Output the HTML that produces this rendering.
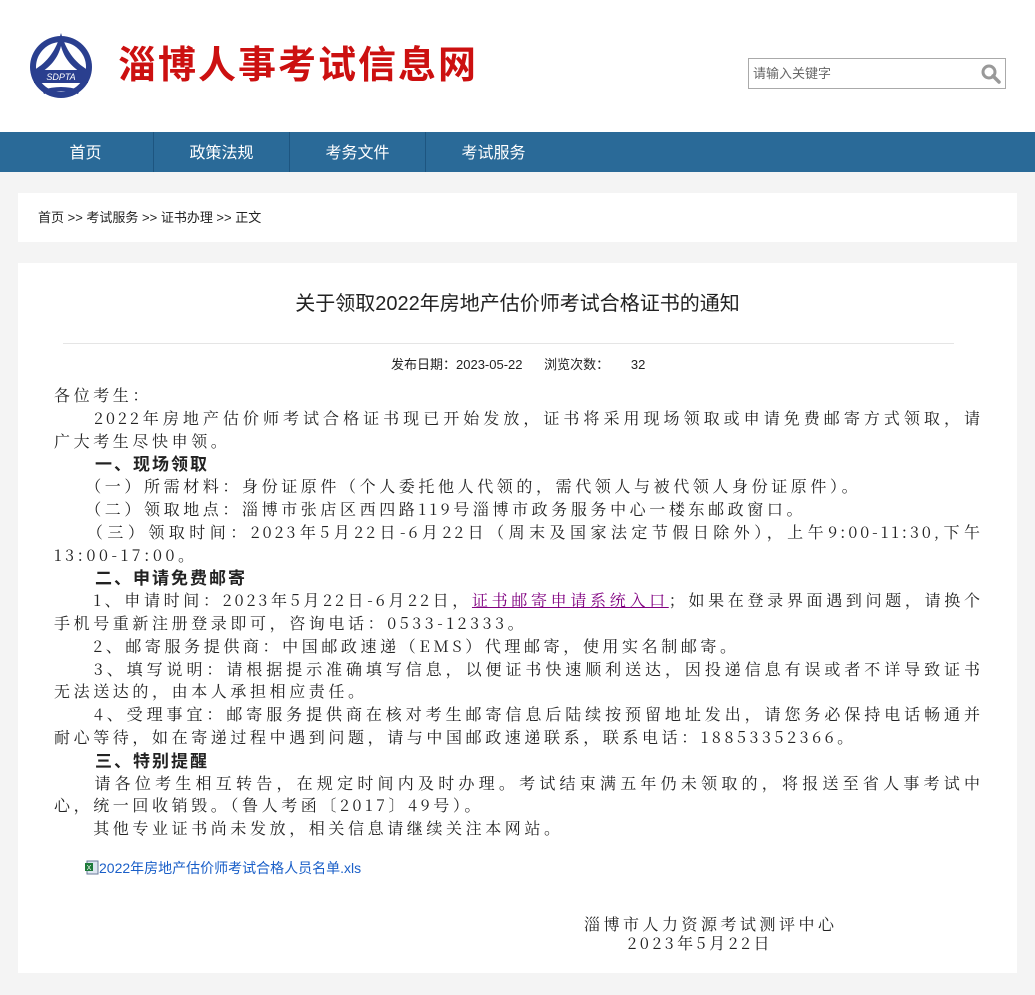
<!DOCTYPE html>
<html><head><meta charset="utf-8"><style>
body{margin:0;background:#f4f4f4;font-family:"Liberation Sans","Noto Sans CJK SC",sans-serif;}
.hd{height:132px;background:#fff;position:relative}
.title{position:absolute;left:118px;top:41px;font-size:38px;font-weight:bold;color:#cc1010;letter-spacing:2px;line-height:50px}
.search{position:absolute;left:748px;top:58px;width:258px;height:31px;border:1px solid #aaa;box-sizing:border-box;font-size:13px;color:#666;line-height:29px;padding-left:4px}
.nav{height:40px;background:#2a6a98;position:relative}
.nav div{position:absolute;top:2px;height:40px;line-height:40px;color:#fff;font-size:16px;text-align:center}
.nav i{position:absolute;top:0;width:1px;height:40px;background:#1d5580}
.bc{position:absolute;left:18px;top:193px;width:999px;height:49px;background:#fff;font-size:13px;line-height:49px;padding-left:20px;box-sizing:border-box;color:#222}
.ct{position:absolute;left:18px;top:263px;width:999px;height:710px;background:#fff}
.h1{position:absolute;left:0;width:100%;top:24px;text-align:center;font-size:20px;color:#222}
.hr{position:absolute;left:45px;right:63px;top:80px;border-top:1px solid #e5e5e5}
.meta{position:absolute;left:373px;top:91px;font-size:13px;color:#222}
.body{position:absolute;left:36px;top:121px;width:929px;font-family:"Noto Serif CJK SC",serif;font-size:16px;line-height:22.8px;color:#222;letter-spacing:3.6px}
.body div{white-space:nowrap}
.j{text-align:justify;text-align-last:justify;white-space:normal!important;letter-spacing:3px}
.b{font-weight:bold;font-family:"Noto Sans CJK SC",sans-serif;letter-spacing:2px;font-size:17px;padding-left:3px}
a{color:#800080;text-decoration:underline}
.att{position:absolute;left:66px;top:595px;font-size:14px;color:#1a5fc8}
.sig{position:absolute;left:566px;top:651px;font-family:"Noto Serif CJK SC",serif;font-size:16px;line-height:19px;color:#222;letter-spacing:3.5px}
</style></head><body>
<div class="hd">
<svg style="position:absolute;left:28px;top:32px" width="66" height="68" viewBox="0 0 66 68"><circle cx="33" cy="35" r="31" fill="#2a3f8f"/><circle cx="33" cy="35" r="25" fill="#fff"/><path d="M33 1 C28 18 20 30 6 38 L10 42 C22 36 30 26 33 14 C36 26 44 36 56 42 L60 38 C46 30 38 18 33 1Z" fill="#2a3f8f"/><rect x="6" y="38" width="54" height="13" fill="#2a3f8f"/><text x="33" y="48" font-size="9" fill="#fff" text-anchor="middle" font-style="italic" font-family="Liberation Sans">SDPTA</text><path d="M14 58 Q33 52 52 58 L50 62 Q33 57 16 62Z" fill="#2a3f8f"/></svg>
<div class="title">淄博人事考试信息网</div>
<div class="search">请输入关键字<svg style="position:absolute;right:4px;top:5px" width="20" height="20" viewBox="0 0 20 20"><circle cx="8" cy="8" r="6" fill="none" stroke="#999" stroke-width="3"/><path d="M12 12 L18 18" stroke="#999" stroke-width="3.5" stroke-linecap="round"/></svg></div>
</div>
<div class="nav">
<div style="left:18px;width:135px">首页</div><i style="left:153px"></i>
<div style="left:154px;width:135px">政策法规</div><i style="left:289px"></i>
<div style="left:290px;width:135px">考务文件</div><i style="left:425px"></i>
<div style="left:426px;width:135px">考试服务</div>
</div>
<div class="bc">首页 &gt;&gt; 考试服务 &gt;&gt; 证书办理 &gt;&gt; 正文</div>
<div class="ct">
<div class="h1">关于领取2022年房地产估价师考试合格证书的通知</div>
<div class="hr"></div>
<div class="meta">发布日期：2023-05-22 &nbsp;&nbsp;&nbsp;&nbsp; 浏览次数： &nbsp;&nbsp;&nbsp;&nbsp;&nbsp;32</div>
<div class="body">
<div>各位考生：</div>
<div class="j">&#12288;&#12288;2022年房地产估价师考试合格证书现已开始发放，证书将采用现场领取或申请免费邮寄方式领取，请</div>
<div>广大考生尽快申领。</div>
<div class="b">&#12288;&#12288;一、现场领取</div>
<div>&#12288;&#12288;（一）所需材料：身份证原件（个人委托他人代领的，需代领人与被代领人身份证原件）。</div>
<div>&#12288;&#12288;（二）领取地点：淄博市张店区西四路119号淄博市政务服务中心一楼东邮政窗口。</div>
<div class="j">&#12288;&#12288;（三）领取时间：2023年5月22日-6月22日（周末及国家法定节假日除外），上午9:00-11:30,下午</div>
<div>13:00-17:00。</div>
<div class="b">&#12288;&#12288;二、申请免费邮寄</div>
<div class="j">&#12288;&#12288;1、申请时间：2023年5月22日-6月22日，<a>证书邮寄申请系统入口</a>；如果在登录界面遇到问题，请换个</div>
<div>手机号重新注册登录即可，咨询电话：0533-12333。</div>
<div>&#12288;&#12288;2、邮寄服务提供商：中国邮政速递（EMS）代理邮寄，使用实名制邮寄。</div>
<div class="j">&#12288;&#12288;3、填写说明：请根据提示准确填写信息，以便证书快速顺利送达，因投递信息有误或者不详导致证书</div>
<div>无法送达的，由本人承担相应责任。</div>
<div class="j">&#12288;&#12288;4、受理事宜：邮寄服务提供商在核对考生邮寄信息后陆续按预留地址发出，请您务必保持电话畅通并</div>
<div>耐心等待，如在寄递过程中遇到问题，请与中国邮政速递联系，联系电话：18853352366。</div>
<div class="b">&#12288;&#12288;三、特别提醒</div>
<div class="j">&#12288;&#12288;请各位考生相互转告，在规定时间内及时办理。考试结束满五年仍未领取的，将报送至省人事考试中</div>
<div>心，统一回收销毁。（鲁人考函〔2017〕49号）。</div>
<div>&#12288;&#12288;其他专业证书尚未发放，相关信息请继续关注本网站。</div>
</div>
<div class="att"><svg width="15" height="15" viewBox="0 0 15 15" style="vertical-align:-2px"><rect x="3" y="1" width="11" height="13" fill="#dde6f0" stroke="#6a7a9a"/><rect x="1" y="3" width="8" height="8" fill="#1e7a3a"/><text x="5" y="10" font-size="7" fill="#fff" text-anchor="middle" font-family="Liberation Sans">X</text></svg>2022年房地产估价师考试合格人员名单.xls</div>
<div class="sig">淄博市人力资源考试测评中心<br>&#12288;&#12288;&#8202;2023年5月22日</div>
</div>
</body></html>
